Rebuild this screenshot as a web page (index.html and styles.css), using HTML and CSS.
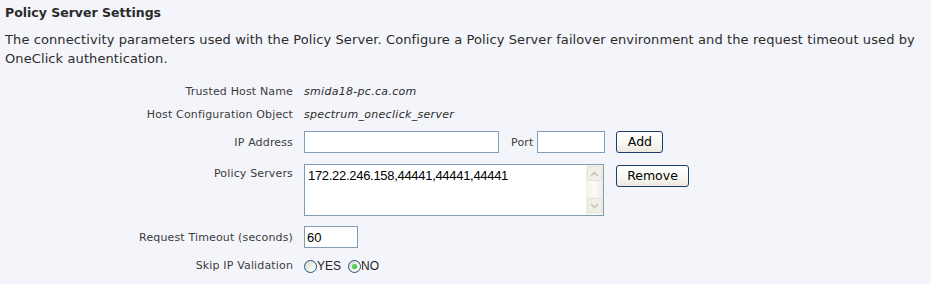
FILE: index.html
```html
<!DOCTYPE html>
<html lang="en">
<head>
<meta charset="utf-8">
<title>Policy Server Settings</title>
<link rel="stylesheet" href="styles.css">
</head>
<body>
<div class="page">
  <h2 class="title">Policy Server Settings</h2>
  <p class="desc">The connectivity parameters used with the Policy Server. Configure a Policy Server failover environment and the request timeout used by OneClick authentication.</p>
  <div class="form">
    <div class="row row-text">
      <span class="label">Trusted Host Name</span>
      <span class="value">smida18-pc.ca.com</span>
    </div>
    <div class="row row-text">
      <span class="label">Host Configuration Object</span>
      <span class="value">spectrum_oneclick_server</span>
    </div>
    <div class="row row-ip">
      <span class="label">IP Address</span>
      <div class="controls">
        <input class="field field-ip" type="text">
        <span class="port-label">Port</span>
        <input class="field field-port" type="text">
        <button class="btn btn-add" type="button">Add</button>
      </div>
    </div>
    <div class="row row-servers">
      <span class="label label-top">Policy Servers</span>
      <div class="controls controls-top">
        <div class="listbox">
          <div class="listbox-text">172.22.246.158,44441,44441,44441</div>
          <div class="scrollbar">
            <span class="sb-btn"><svg width="9" height="6" viewBox="0 0 9 6"><path d="M1 5 L4.5 1.5 L8 5" fill="none" stroke="#c6c6bd" stroke-width="1.6"/></svg></span>
            <span class="sb-btn"><svg width="9" height="6" viewBox="0 0 9 6"><path d="M1 1 L4.5 4.5 L8 1" fill="none" stroke="#c6c6bd" stroke-width="1.6"/></svg></span>
          </div>
        </div>
        <button class="btn btn-remove" type="button">Remove</button>
      </div>
    </div>
    <div class="row row-timeout">
      <span class="label">Request Timeout (seconds)</span>
      <div class="controls">
        <input class="field field-timeout" type="text" value="60">
      </div>
    </div>
    <div class="row row-skip">
      <span class="label">Skip IP Validation</span>
      <div class="controls radios">
        <label class="radio-opt"><input class="radio" type="radio" name="skip"><span>YES</span></label>
        <label class="radio-opt"><input class="radio" type="radio" name="skip" checked><span>NO</span></label>
      </div>
    </div>
  </div>
</div>
</body>
</html>
```
FILE: styles.css
```css
html, body {
  margin: 0;
  padding: 0;
  background: #f4f5fa;
}
.page {
  padding: 5px 8px 0 5px;
  font-family: "DejaVu Sans", Verdana, sans-serif;
  color: #2b2b2b;
}
.title {
  margin: 0;
  font-size: 12.5px;
  font-weight: bold;
  line-height: 16px;
  color: #2b2b2b;
}
.desc {
  margin: 9px 0 0 0;
  font-size: 13px;
  letter-spacing: 0.1px;
  line-height: 19px;
  color: #2b2b2b;
}
.form {
  margin-top: 12px;
  font-size: 11px;
  letter-spacing: 0.15px;
  color: #3c3c3c;
}
.row {
  display: flex;
}
.label {
  flex: 0 0 288px;
  text-align: right;
  margin-right: 11px;
}
.row-text {
  line-height: 23px;
}
.value {
  font-style: italic;
  color: #2b2b2b;
  letter-spacing: 0.3px;
}
.row-ip {
  margin-top: 5px;
  align-items: center;
}
.controls {
  display: flex;
  align-items: center;
  letter-spacing: 0;
}
.controls-top {
  align-items: flex-start;
}
.field {
  box-sizing: border-box;
  height: 22px;
  border: 1px solid #7f9db9;
  background: #fff;
  margin: 0;
  padding: 0 2px;
  font-family: "Liberation Sans", Arial, sans-serif;
  font-size: 13px;
  color: #000;
  outline: none;
}
.field-ip { width: 195px; }
.port-label { margin: 0 4px 0 12px; letter-spacing: 0.15px; }
.field-port { width: 68px; }
.field-timeout { width: 54px; }
.btn {
  box-sizing: border-box;
  height: 22px;
  margin: 0;
  padding: 0 6px;
  border: 1px solid #1d3d6b;
  border-radius: 3px;
  background: linear-gradient(#ffffff, #f7f6f0 60%, #ebe9dd);
  font-family: "DejaVu Sans", Verdana, sans-serif;
  font-size: 12.5px;
  color: #000;
  line-height: 18px;
}
.btn-add { margin-left: 11px; width: 47px; }
.btn-remove { margin-left: 12px; margin-top: 1px; width: 73px; }
.row-servers {
  margin-top: 11px;
}
.label-top {
  padding-top: 3px;
  line-height: 14px;
}
.listbox {
  box-sizing: border-box;
  width: 300px;
  height: 52px;
  border: 1px solid #7f9db9;
  background: #fff;
  display: flex;
}
.listbox-text {
  flex: 1;
  padding: 3px 3px;
  font-family: "Liberation Sans", Arial, sans-serif;
  font-size: 13px;
  letter-spacing: -0.3px;
  line-height: 15px;
  color: #000;
}
.scrollbar {
  width: 15px;
  padding: 1px 1px 2px 1px;
  display: flex;
  flex-direction: column;
  justify-content: space-between;
  background: linear-gradient(to right, #f4f3e9, #fbfaf4 50%, #efeee3);
}
.sb-btn {
  box-sizing: border-box;
  width: 15px;
  height: 15px;
  border: 1px solid #e2e1d8;
  border-radius: 2px;
  background: #f1f0e8;
  display: flex;
  align-items: center;
  justify-content: center;
}
.row-timeout {
  margin-top: 10px;
  align-items: center;
}
.row-skip {
  margin-top: 10px;
  line-height: 16px;
  align-items: center;
}
.radios {
  font-family: "Liberation Sans", Arial, sans-serif;
  font-size: 12px;
  color: #222;
}
.radio-opt {
  display: flex;
  align-items: center;
  margin-right: 7px;
}
.radio {
  -webkit-appearance: none;
  appearance: none;
  box-sizing: border-box;
  width: 13px;
  height: 13px;
  margin: 0;
  border: 1px solid #1d5281;
  border-radius: 50%;
  background: linear-gradient(135deg, #d8d8d0, #f6f6f2 70%, #ffffff);
  position: relative;
}
.radio:checked::after {
  content: "";
  position: absolute;
  left: 3px;
  top: 3px;
  width: 5px;
  height: 5px;
  border-radius: 50%;
  background: radial-gradient(circle at 40% 40%, #6fe26f, #21a121);
}
```
